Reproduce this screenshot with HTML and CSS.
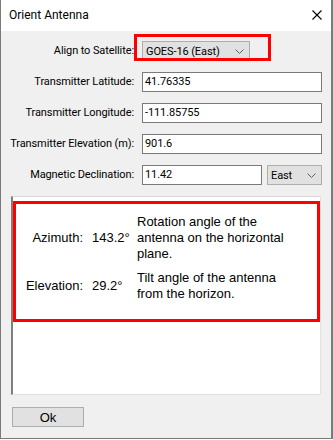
FILE: index.html
```html
<!DOCTYPE html>
<html>
<head>
<meta charset="utf-8">
<link rel="stylesheet" href="styles.css">
</head>
<body>
<div class="window">
  <div class="titlebar">
    <span class="title">Orient Antenna</span>
    <svg class="close" width="10" height="10" viewBox="0 0 10 10"><path d="M0.5 0.5 L9.5 9.5 M9.5 0.5 L0.5 9.5" stroke="#000" stroke-width="1.1" fill="none"/></svg>
  </div>
  <div class="content">
    <div class="form">
      <div class="lbl">Align to Satellite:</div>
      <div class="field">
        <div class="combo sat"><span>GOES-16 (East)</span><svg class="chev" width="9" height="5" viewBox="0 0 9 5"><path d="M0.5 0.5 L4.5 4.5 L8.5 0.5" stroke="#606060" stroke-width="1" fill="none"/></svg></div>
        <div class="mark"></div>
      </div>
      <div class="lbl">Transmitter Latitude:</div>
      <div class="field"><div class="input full">41.76335</div></div>
      <div class="lbl">Transmitter Longitude:</div>
      <div class="field"><div class="input full">-111.85755</div></div>
      <div class="lbl">Transmitter Elevation (m):</div>
      <div class="field"><div class="input full">901.6</div></div>
      <div class="lbl">Magnetic Declination:</div>
      <div class="field split">
        <div class="input decl">11.42</div>
        <div class="combo dir"><span>East</span><svg class="chev" width="9" height="5" viewBox="0 0 9 5"><path d="M0.5 0.5 L4.5 4.5 L8.5 0.5" stroke="#606060" stroke-width="1" fill="none"/></svg></div>
      </div>
    </div>
    <div class="panel">
      <div class="result">
        <div class="rlabel">Azimuth:</div>
        <div class="rval">143.2°</div>
        <div class="rdesc">Rotation angle of the<br>antenna on the horizontal<br>plane.</div>
        <div class="rlabel">Elevation:</div>
        <div class="rval">29.2°</div>
        <div class="rdesc">Tilt angle of the antenna<br>from the horizon.</div>
      </div>
    </div>
    <div class="footer"><button class="ok">Ok</button></div>
  </div>
</div>
</body>
</html>
```
FILE: styles.css
```css
html, body {
  margin: 0;
  padding: 0;
  background: #ffffff;
}
.window {
  box-sizing: border-box;
  width: 333px;
  height: 439px;
  border-left: 1px solid #7a7a7a;
  border-right: 2px solid #7a7a7a;
  border-bottom: 1px solid #7a7a7a;
  display: flex;
  flex-direction: column;
  font-family: Roboto, "Noto Sans", sans-serif;
  font-size: 11px;
  letter-spacing: -0.1px;
  color: #000;
}
.titlebar {
  height: 31px;
  flex: none;
  background: #fff;
  display: flex;
  align-items: center;
  justify-content: space-between;
  padding: 0 9px 1px 8px;
  box-sizing: border-box;
}
.title {
  font-size: 12px;
  letter-spacing: 0;
}
.close {
  display: block;
}
.content {
  flex: 1;
  background: #f0f0f0;
  padding-top: 10px;
  display: flex;
  flex-direction: column;
}
.form {
  display: grid;
  grid-template-columns: 134px 1fr;
  column-gap: 7px;
  row-gap: 11px;
  padding-right: 9px;
}
.lbl {
  text-align: right;
  padding-right: 1px;
  height: 20px;
  line-height: 20px;
  white-space: nowrap;
}
.field {
  position: relative;
  height: 20px;
  display: flex;
}
.split {
  gap: 5px;
}
.input {
  box-sizing: border-box;
  height: 20px;
  background: #fff;
  border: 1px solid #7a7a7a;
  padding-left: 2px;
  line-height: 18px;
}
.full {
  flex: 1;
}
.decl {
  width: 120px;
}
.combo {
  box-sizing: border-box;
  height: 20px;
  background: #e1e1e1;
  border: 1px solid #adadad;
  display: flex;
  align-items: center;
  justify-content: space-between;
  padding: 0 5px 0 3px;
}
.sat {
  width: 108px;
}
.dir {
  flex: 1;
}
.chev {
  display: block;
}
.mark {
  position: absolute;
  left: -8px;
  top: -7px;
  width: 137px;
  height: 27px;
  box-sizing: border-box;
  border: 3px solid #ff0000;
}
.panel {
  box-sizing: border-box;
  margin: 11px 10px 0 10px;
  height: 199px;
  background: #fff;
  border-top: 1px solid #d8d8d8;
  border-left: 2px solid #7f7f7f;
  border-right: 1px solid #e3e3e3;
  border-bottom: 1px solid #e3e3e3;
  padding-top: 4px;
}
.result {
  box-sizing: border-box;
  height: 121px;
  border: 3px solid #ff0000;
  padding-top: 10px;
  display: grid;
  grid-template-columns: 67px 38px auto;
  column-gap: 9px;
  row-gap: 8px;
  align-items: center;
  align-content: start;
  font-family: "Liberation Sans", Arial, sans-serif;
  font-size: 13px;
  line-height: 16px;
  letter-spacing: 0;
}
.result .rdesc {
  margin-left: -2px;
}
.rlabel {
  text-align: right;
}
.footer {
  padding: 12px 0 0 11px;
}
.ok {
  box-sizing: border-box;
  width: 72px;
  height: 20px;
  background: #e1e1e1;
  border: 1px solid #adadad;
  font-family: "Liberation Sans", Arial, sans-serif;
  font-size: 13px;
  color: #000;
  padding: 0;
  margin: 0;
  display: block;
}
```
